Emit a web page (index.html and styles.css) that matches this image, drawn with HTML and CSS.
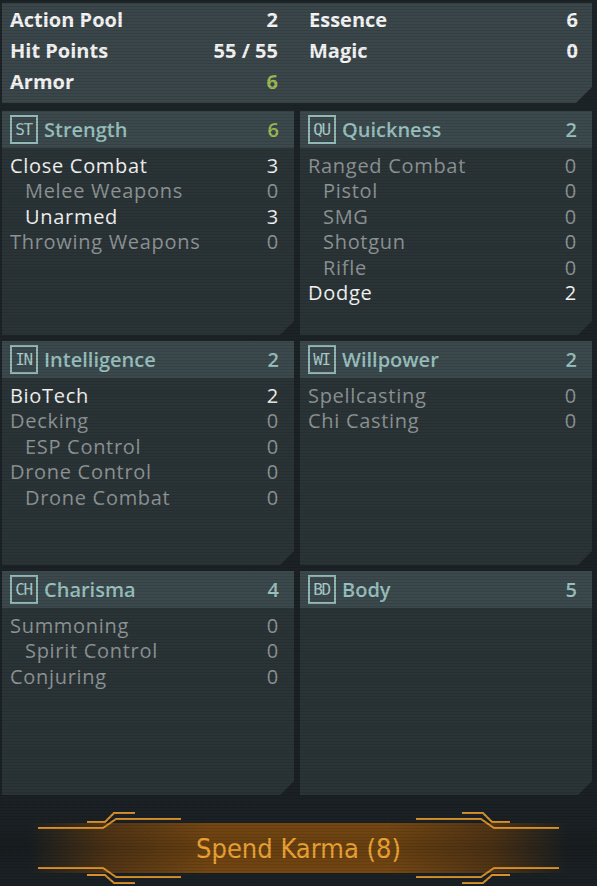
FILE: index.html
```html
<!DOCTYPE html>
<html>
<head>
<meta charset="utf-8">
<link rel="stylesheet" href="styles.css">
</head>
<body>
<div class="screen">
  <section class="summary">
    <div class="sum-col">
      <div class="srow"><span>Action Pool</span><span>2</span></div>
      <div class="srow"><span>Hit Points</span><span>55 / 55</span></div>
      <div class="srow"><span>Armor</span><span class="green">6</span></div>
    </div>
    <div class="sum-col right">
      <div class="srow"><span>Essence</span><span>6</span></div>
      <div class="srow"><span>Magic</span><span>0</span></div>
    </div>
  </section>

  <section class="attrs">
    <div class="card">
      <div class="card-head"><span class="badge">ST</span><span class="title">Strength</span><span class="hval green">6</span></div>
      <ul class="skills">
        <li class="on"><span>Close Combat</span><span>3</span></li>
        <li class="sub"><span>Melee Weapons</span><span>0</span></li>
        <li class="sub on"><span>Unarmed</span><span>3</span></li>
        <li><span>Throwing Weapons</span><span>0</span></li>
      </ul>
    </div>
    <div class="card">
      <div class="card-head"><span class="badge">QU</span><span class="title">Quickness</span><span class="hval">2</span></div>
      <ul class="skills">
        <li><span>Ranged Combat</span><span>0</span></li>
        <li class="sub"><span>Pistol</span><span>0</span></li>
        <li class="sub"><span>SMG</span><span>0</span></li>
        <li class="sub"><span>Shotgun</span><span>0</span></li>
        <li class="sub"><span>Rifle</span><span>0</span></li>
        <li class="on"><span>Dodge</span><span>2</span></li>
      </ul>
    </div>
    <div class="card">
      <div class="card-head"><span class="badge">IN</span><span class="title">Intelligence</span><span class="hval">2</span></div>
      <ul class="skills">
        <li class="on"><span>BioTech</span><span>2</span></li>
        <li><span>Decking</span><span>0</span></li>
        <li class="sub"><span>ESP Control</span><span>0</span></li>
        <li><span>Drone Control</span><span>0</span></li>
        <li class="sub"><span>Drone Combat</span><span>0</span></li>
      </ul>
    </div>
    <div class="card">
      <div class="card-head"><span class="badge">WI</span><span class="title">Willpower</span><span class="hval">2</span></div>
      <ul class="skills">
        <li><span>Spellcasting</span><span>0</span></li>
        <li><span>Chi Casting</span><span>0</span></li>
      </ul>
    </div>
    <div class="card">
      <div class="card-head"><span class="badge">CH</span><span class="title">Charisma</span><span class="hval">4</span></div>
      <ul class="skills">
        <li><span>Summoning</span><span>0</span></li>
        <li class="sub"><span>Spirit Control</span><span>0</span></li>
        <li><span>Conjuring</span><span>0</span></li>
      </ul>
    </div>
    <div class="card">
      <div class="card-head"><span class="badge">BD</span><span class="title">Body</span><span class="hval">5</span></div>
      <ul class="skills"></ul>
    </div>
  </section>

  <footer class="footer">
    <button class="karma">
      <svg class="deco" width="597" height="80" viewBox="0 0 597 80">
        <g fill="none" stroke="#d8902c" stroke-width="2">
          <polyline points="87,14 105,14 114,5 135,5"/>
          <polyline points="38,20 103,20 116,11 181,11"/>
          <polyline points="38,60 103,60 116,69 181,69"/>
          <polyline points="87,67 105,67 114,75 135,75"/>
          <polyline points="510,14 492,14 483,5 462,5"/>
          <polyline points="559,20 494,20 481,11 416,11"/>
          <polyline points="559,60 494,60 481,69 416,69"/>
          <polyline points="510,67 492,67 483,75 462,75"/>
        </g>
      </svg>
      <span class="karma-label">Spend Karma (8)</span>
    </button>
  </footer>
</div>
</body>
</html>
```

FILE: styles.css
```css
* { box-sizing: border-box; }
html, body { margin: 0; padding: 0; }
body {
  width: 597px;
  height: 886px;
  overflow: hidden;
  background: #1a2023;
  font-family: "Open Sans", "Noto Sans", sans-serif;
}
.screen {
  position: relative;
  width: 597px;
  height: 886px;
  padding-top: 3px;
  background: linear-gradient(180deg, #1d2427 0%, #1a2023 100%);
}
.screen::after {
  content: "";
  position: absolute;
  inset: 0;
  pointer-events: none;
  background: repeating-linear-gradient(180deg, rgba(0,0,0,0.10) 0 1px, rgba(0,0,0,0) 1px 3px);
}

/* summary */
.summary {
  margin: 0 5px 0 2px;
  height: 100px;
  display: grid;
  grid-template-columns: 295px 295px;
  background: #3a4649;
  clip-path: polygon(0 0, 100% 0, 100% calc(100% - 16px), calc(100% - 16px) 100%, 0 100%);
  padding-top: 1px;
}
.sum-col { padding: 0 19px 0 8px; }
.sum-col.right { padding: 0 14px 0 12px; }
.srow {
  display: flex;
  justify-content: space-between;
  height: 31px;
  line-height: 31px;
  font-size: 20px;
  font-weight: 700;
  color: #f4f4f4;
}
.green { color: #9bb956 !important; }

/* attribute cards */
.attrs {
  margin: 8px 0 0 2px;
  display: grid;
  grid-template-columns: 292px 292px;
  grid-template-rows: 224px 224px 224px;
  gap: 6px;
}
.card {
  background: #2a3336;
  clip-path: polygon(0 0, 100% 0, 100% calc(100% - 14px), calc(100% - 14px) 100%, 0 100%);
}
.card-head {
  height: 37px;
  display: flex;
  align-items: center;
  padding: 0 15px 0 8px;
  background: #3b484c;
  color: #98c0be;
}
.badge {
  width: 28px;
  height: 29px;
  border: 2px solid #93b9b7;
  display: flex;
  align-items: center;
  justify-content: center;
  font-family: "DejaVu Sans Mono", monospace;
  font-size: 16px;
  color: #a8cbc9;
  letter-spacing: -1.5px;
  padding-right: 1px;
}
.title {
  margin-left: 6px;
  font-size: 20px;
  font-weight: 600;
  flex: 1;
}
.hval {
  font-size: 20px;
  font-weight: 600;
}
.skills {
  list-style: none;
  margin: 0;
  padding: 5px 15px 0 8px;
}
.skills li {
  display: flex;
  justify-content: space-between;
  height: 25.4px;
  line-height: 25.4px;
  font-size: 20px;
  letter-spacing: 0.7px;
  color: #8d9495;
}
.skills li.sub { padding-left: 15px; }
.skills li.on { color: #f3f3f3; }

/* footer / karma button */
.footer {
  height: 91px;
  padding-top: 13px;
}
.karma {
  position: relative;
  width: 597px;
  height: 80px;
  border: 0;
  padding: 0;
  display: flex;
  align-items: center;
  justify-content: center;
  background:
    linear-gradient(180deg, rgba(0,0,0,0) 0%, rgba(0,0,0,0.12) 50%, rgba(0,0,0,0) 100%) center / 100% 48px no-repeat,
    linear-gradient(90deg, rgba(0,0,0,0) 5%, rgba(120,68,12,0.6) 18%, rgba(132,78,16,0.85) 35%, rgba(132,78,16,0.85) 65%, rgba(120,68,12,0.6) 82%, rgba(0,0,0,0) 95%) center / 100% 50px no-repeat;
  cursor: pointer;
}
.deco {
  position: absolute;
  left: 0;
  top: 0;
  overflow: visible;
}
.karma-label {
  position: relative;
  font-family: "DejaVu Sans", sans-serif;
  font-stretch: condensed;
  font-size: 27px;
  color: #eaa234;
  letter-spacing: 0;
}
```
